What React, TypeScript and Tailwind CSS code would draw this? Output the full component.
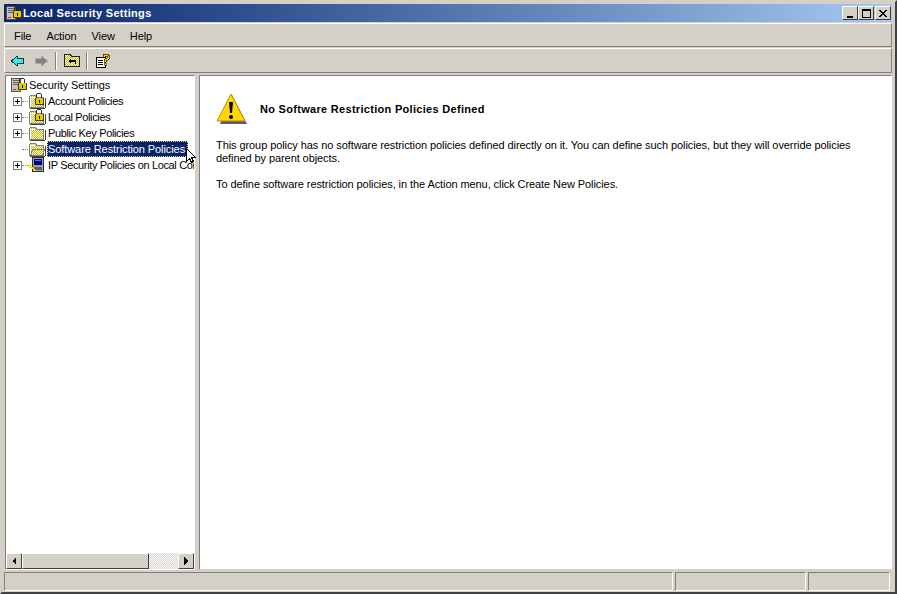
import React from "react";

const FONT = { fontFamily: '"Liberation Sans", Arial, sans-serif' };

const LockBadge = () => (
  <g shapeRendering="crispEdges">
    <path d="M9 0h4v1h1v4h-1V1H9v4H8V1h1z" fill="#303030" />
    <rect x="7" y="5" width="9" height="7" fill="#404000" />
    <rect x="8" y="5" width="7" height="6" fill="#e8c800" />
    <rect x="11" y="7" width="1" height="3" fill="#000" />
  </g>
);

const FolderIcon = ({ open, lock }: { open?: boolean; lock?: boolean }) => (
  <svg width="18" height="16" viewBox="0 0 18 16" shapeRendering="crispEdges">
    <defs>
      <pattern id="dither" width="2" height="2" patternUnits="userSpaceOnUse">
        <rect width="2" height="2" fill="#ffff99" />
        <rect width="1" height="1" fill="#c8b850" />
        <rect x="1" y="1" width="1" height="1" fill="#c8b850" />
      </pattern>
    </defs>
    <path d="M2.500 2.500h5l1 2h7v10h-14v-11z" fill="url(#dither)" stroke="#808080" />
    <path d="M2 4h5M2 4v9" stroke="#ffffff" />
    <path d="M2 15h15M17 5v10" stroke="#404040" />
    {open && <path d="M2.500 14.500l2-6h12l-2 6z" fill="url(#dither)" stroke="#808080" />}
    {lock && <LockBadge />}
  </svg>
);

const RootIcon = () => (
  <svg width="18" height="16" viewBox="0 0 18 16" shapeRendering="crispEdges">
    <rect x="1.500" y="1.500" width="9" height="13" fill="#c8c4bc" stroke="#505050" />
    <path d="M3 3h6M3 5h6M3 7h6" stroke="#606060" />
    <rect x="3" y="12" width="3" height="1" fill="#e02020" />
    <g transform="translate(1 1)">
      <LockBadge />
    </g>
  </svg>
);

const IpIcon = () => (
  <svg width="18" height="16" viewBox="0 0 18 16" shapeRendering="crispEdges">
    <rect x="4.500" y="0.500" width="11" height="14" fill="#a0a0a0" stroke="#303030" />
    <rect x="6" y="2" width="8" height="6" fill="#000080" />
    <rect x="7" y="3" width="6" height="1" fill="#4080e0" />
    <rect x="6" y="10" width="8" height="3" fill="#606060" />
    <path d="M0 8h3v1h1v1h1v1h1v1h1v1h1v1H6v-1H5v-1H4v-1H1v-1H0z" fill="#ffe800" />
  </svg>
);

const PlusBox = () => (
  <svg width="9" height="9" viewBox="0 0 9 9" shapeRendering="crispEdges" className="shrink-0">
    <rect x="0.500" y="0.500" width="8" height="8" fill="#fff" stroke="#808080" />
    <path d="M2 4.500h5M4.500 2v5" stroke="#000" />
  </svg>
);

type Row = { label: string; icon: React.ReactNode; expand?: boolean; selected?: boolean };

const rows: Row[] = [
  { label: "Account Policies", icon: <FolderIcon lock />, expand: true },
  { label: "Local Policies", icon: <FolderIcon lock />, expand: true },
  { label: "Public Key Policies", icon: <FolderIcon />, expand: true },
  { label: "Software Restriction Policies", icon: <FolderIcon open />, selected: true },
  { label: "IP Security Policies on Local Computer", icon: <IpIcon />, expand: true },
];

const TreeRow = ({ label, icon, expand, selected }: Row) => (
  <div className="flex h-4 items-center whitespace-nowrap">
    <div className="flex w-[22px] shrink-0 items-center pl-[7px]">
      {expand ? <PlusBox /> : <div className="w-[9px]" />}
      <div className="w-[6px] border-t border-dotted border-[#808080]" />
    </div>
    <div className="w-[18px] shrink-0">{icon}</div>
    <span
      className={
        selected
          ? "ml-px h-4 border border-dotted border-[#e8d060] bg-[#0a246a] pr-[2px] leading-[14px] text-white"
          : "ml-[2px] tracking-[-0.35px]"
      }
    >
      {label}
    </span>
  </div>
);

const CapButton = ({ children }: { children: React.ReactNode }) => (
  <div className="flex h-[14px] w-4 items-center justify-center border border-b-[#404040] border-l-white border-r-[#404040] border-t-white bg-[#d4d0c8]">
    {children}
  </div>
);

const ScrollArrow = ({ dir }: { dir: "left" | "right" }) => (
  <div className="flex h-[16px] w-[16px] shrink-0 items-center justify-center border border-b-[#404040] border-l-white border-r-[#404040] border-t-white bg-[#d4d0c8]">
    <svg width="5" height="8" viewBox="0 0 5 8" shapeRendering="crispEdges">
      <path d={dir === "left" ? "M4 0v8L0 4z" : "M0 0v8l4-4z"} fill="#000" />
    </svg>
  </div>
);

const Sep = () => <div className="ml-[6px] mr-[7px] h-[18px] w-[2px] border-l border-r border-l-[#808080] border-r-white" />;

const StatusCell = ({ className }: { className: string }) => (
  <div className={`h-[19px] border border-b-white border-l-[#808080] border-r-white border-t-[#808080] ${className}`} />
);

export default function App() {
  return (
    <div
      className="relative flex h-[594px] w-[897px] flex-col overflow-hidden border-2 border-b-[#404040] border-l-[#d4d0c8] border-r-[#404040] border-t-[#d4d0c8] bg-[#d4d0c8] pb-px pl-[2px] pr-[3px] pt-[2px] text-[11px] leading-[13px] tracking-[-0.08px] text-black"
      style={FONT}
    >
      {/* title bar */}
      <div className="flex h-[18px] shrink-0 items-center bg-gradient-to-r from-[#0a246a] to-[#a6caf0] pl-[1px] pr-[1px] font-bold text-white">
        <RootIcon />
        <span className="tracking-[0.3px]">Local Security Settings</span>
        <div className="ml-auto flex">
          <CapButton>
            <div className="mt-[7px] h-[2px] w-[6px] bg-black" />
          </CapButton>
          <CapButton>
            <div className="h-[9px] w-[9px] border border-t-2 border-black" />
          </CapButton>
          <div className="ml-[1px]">
            <CapButton>
              <svg width="8" height="7" viewBox="0 0 8 7" shapeRendering="crispEdges">
                <path d="M0 0h2v1h1v1h2V1h1V0h2v1H7v1H6v1H5v1h1v1h1v1h1v1H6V6H5V5H3v1H2v1H0V6h1V5h1V4h1V3H2V2H1V1H0z" fill="#000" />
              </svg>
            </CapButton>
          </div>
        </div>
      </div>

      {/* menu bar */}
      <div className="mt-px flex h-[24px] shrink-0 items-center gap-[15px] border border-b-[#808080] border-l-white border-r-[#808080] border-t-white pl-[9px] pt-[2px]">
        {["File", "Action", "View", "Help"].map((m) => (
          <span key={m}>{m}</span>
        ))}
      </div>

      {/* toolbar */}
      <div className="mt-px flex h-[25px] shrink-0 items-center border border-b-[#808080] border-l-white border-r-[#808080] border-t-white pl-[6px]">
        <svg width="14" height="12" viewBox="0 0 14 12" shapeRendering="crispEdges">
          <path d="M6.500 1.500v2h6v5h-6v2h-1l-5-4.500 5-4.500z" fill="#40e8e8" stroke="#004040" />
        </svg>
        <svg width="14" height="12" viewBox="0 0 14 12" shapeRendering="crispEdges" className="ml-[9px] mr-px">
          <path d="M7.500 1.500v2h-6v5h6v2h1l5-4.500-5-4.500z" fill="#808080" stroke="#a8a8a8" />
        </svg>
        <Sep />
        <svg width="16" height="15" viewBox="0 0 16 15" shapeRendering="crispEdges">
          <path d="M0.500 1.500h6l1 2h8v10h-15z" fill="url(#dither)" stroke="#202000" />
          <path d="M4 8l3-3v2h5v4h-1V9H7v2z" fill="#000" />
        </svg>
        <Sep />
        <svg width="16" height="16" viewBox="0 0 16 16" shapeRendering="crispEdges">
          <path d="M1.500 4.500h9v10h-9z" fill="#fff" stroke="#000" />
          <path d="M3 7h5M3 9h5M3 11h5" stroke="#000" />
          <path d="M8 1h5v1h1v4h-1v1h-2v2H9V6h1V5h2V3h-2v1H8z" fill="#ffd800" stroke="#000" strokeWidth="0.6" />
          <rect x="9" y="10" width="2" height="2" fill="#ffd800" stroke="#000" strokeWidth="0.4" />
        </svg>
      </div>

      {/* panes */}
      <div className="mt-[2px] flex min-h-0 flex-1 pl-px">
        <div className="flex w-[190px] shrink-0 flex-col border border-b-white border-l-[#808080] border-r-white border-t-[#808080] bg-white">
          <div className="min-h-0 flex-1 overflow-hidden pt-px">
            <div className="flex h-4 items-center whitespace-nowrap pl-[4px]">
              <RootIcon />
              <span className="ml-px">Security Settings</span>
            </div>
            {rows.map((r) => (
              <TreeRow key={r.label} {...r} />
            ))}
          </div>
          {/* horizontal scrollbar */}
          <div className="flex h-[16px] shrink-0">
            <ScrollArrow dir="left" />
            <div className="h-[16px] w-[127px] border border-b-[#404040] border-l-white border-r-[#404040] border-t-white bg-[#d4d0c8]" />
            <div className="flex-1 bg-[repeating-conic-gradient(#d4d0c8_0_25%,#ffffff_0_50%)] bg-[length:2px_2px]" />
            <ScrollArrow dir="right" />
          </div>
        </div>

        <div className="ml-[4px] min-w-0 flex-1 border border-b-[#d4d0c8] border-l-[#808080] border-r-white border-t-[#808080] bg-white">
          <div className="flex items-center pl-[16px] pt-[17px]">
            <svg width="32" height="32" viewBox="0 0 32 32">
              <path d="M16 2L31 31H4z" fill="#5a5a7a" />
              <path d="M15 1L29 28H1z" fill="#ffd800" stroke="#b89000" strokeWidth="1" strokeLinejoin="round" />
              <path d="M13 9h4l-1 11h-2z" fill="#000" />
              <circle cx="15" cy="24" r="2" fill="#000" />
            </svg>
            <span className="ml-[12px] font-bold tracking-[0.3px]">No Software Restriction Policies Defined</span>
          </div>
          <p className="mt-[14px] w-[660px] pl-[16px]">
            This group policy has no software restriction policies defined directly on it. You can define such policies, but they will override policies defined by parent objects.
          </p>
          <p className="mt-[13px] pl-[16px]">
            To define software restriction policies, in the Action menu, click Create New Policies.
          </p>
        </div>
      </div>

      {/* status bar */}
      <div className="mt-[2px] flex shrink-0 gap-[2px] pr-[2px]">
        <StatusCell className="w-[669px]" />
        <StatusCell className="w-[131px]" />
        <StatusCell className="flex-1" />
      </div>

      {/* mouse pointer over tree */}
      <svg
        width="13"
        height="22"
        viewBox="0 0 13 22"
        className="absolute left-[183px] top-[145px]"
        shapeRendering="crispEdges"
      >
        <path d="M1.500 1.500v13l3-3 2 4 2-1-2-4h4z" fill="#fff" stroke="#000" />
      </svg>
    </div>
  );
}
